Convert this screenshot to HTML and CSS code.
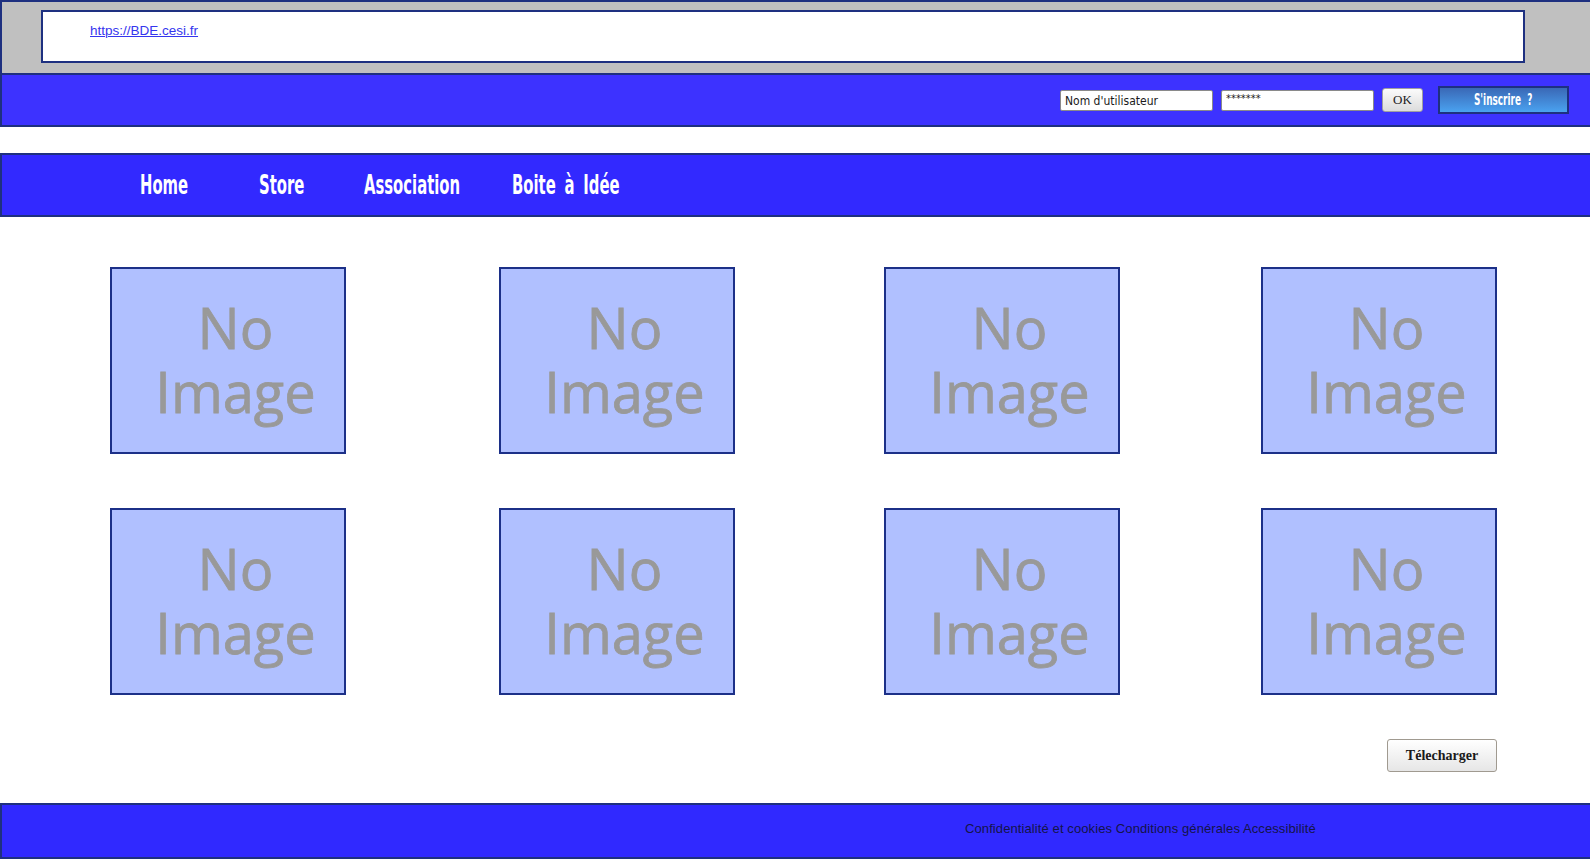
FILE: index.html
```html
<!DOCTYPE html>
<html lang="fr">
<head>
<meta charset="utf-8">
<title>BDE CESI</title>
<link rel="stylesheet" href="styles.css">
</head>
<body>
<header class="top">
  <div class="url-bar">
    <div class="url-box"><a class="url-link" href="#">https://BDE.cesi.fr</a></div>
  </div>
  <div class="login-bar">
    <input class="field" type="text" value="Nom d'utilisateur">
    <input class="field field-pass" type="text" value="*******">
    <button class="ok-btn">OK</button>
    <button class="signup-btn"><span>S'inscrire ?</span></button>
  </div>
</header>

<nav class="nav">
  <a class="nav-item w-home" href="#"><span>Home</span></a>
  <a class="nav-item w-store" href="#"><span>Store</span></a>
  <a class="nav-item w-assoc" href="#"><span>Association</span></a>
  <a class="nav-item w-idea" href="#"><span>Boite à Idée</span></a>
</nav>

<main class="gallery">
  <div class="grid">
    <div class="cell"><div class="noimg"><span class="l1">No</span><span class="l2">Image</span></div></div>
    <div class="cell"><div class="noimg"><span class="l1">No</span><span class="l2">Image</span></div></div>
    <div class="cell"><div class="noimg"><span class="l1">No</span><span class="l2">Image</span></div></div>
    <div class="cell"><div class="noimg"><span class="l1">No</span><span class="l2">Image</span></div></div>
    <div class="cell"><div class="noimg"><span class="l1">No</span><span class="l2">Image</span></div></div>
    <div class="cell"><div class="noimg"><span class="l1">No</span><span class="l2">Image</span></div></div>
    <div class="cell"><div class="noimg"><span class="l1">No</span><span class="l2">Image</span></div></div>
    <div class="cell"><div class="noimg"><span class="l1">No</span><span class="l2">Image</span></div></div>
  </div>
  <div class="actions">
    <button class="dl-btn">Télecharger</button>
  </div>
</main>

<footer class="footer">
  <span>Confidentialité et cookies Conditions générales Accessibilité</span>
</footer>
</body>
</html>
```

FILE: styles.css
```css
html, body {
  margin: 0;
  padding: 0;
  background: #ffffff;
}

body {
  width: 1590px;
  overflow: hidden;
  font-family: "Liberation Sans", Arial, sans-serif;
}

.top {
  display: flex;
  flex-direction: column;
}

.url-bar {
  background: #c0c0c0;
  border-top: 2px solid #1e3080;
  border-left: 2px solid #1e3080;
  padding: 8px 0 0 39px;
  box-sizing: border-box;
  height: 73px;
}

.url-box {
  width: 1484px;
  height: 53px;
  box-sizing: border-box;
  background: #ffffff;
  border: 2px solid #1e3080;
  padding: 9px 0 0 47px;
}

.url-link {
  font-family: "Liberation Sans", Arial, sans-serif;
  font-size: 13.5px;
  color: #3535ee;
  text-decoration: underline;
}

.login-bar {
  height: 50px;
  background: #3d32ff;
  border-top: 2px solid #1e3080;
  border-bottom: 2px solid #1e3080;
  border-left: 2px solid #1e3080;
  display: flex;
  align-items: center;
  justify-content: flex-end;
  padding-right: 21px;
}

.field {
  width: 153px;
  height: 21px;
  box-sizing: border-box;
  margin: 1px 8px 0 0;
  padding: 0 4px;
  border: 1px solid #8a8a8a;
  border-radius: 2px;
  background: #ffffff;
  font-family: "DejaVu Sans Condensed", "DejaVu Sans", sans-serif;
  font-size: 12px;
  color: #1a1a1a;
  outline: none;
}

.field-pass {
  font-size: 11px;
  padding-bottom: 5px;
}

.ok-btn {
  width: 41px;
  height: 24px;
  margin: 0 15px 1px 0;
  padding: 0;
  border: 1px solid #a0a0a0;
  border-radius: 3px;
  background: linear-gradient(#fbfbfb, #dcdcdc);
  font-family: "Liberation Serif", "Times New Roman", serif;
  font-size: 13px;
  color: #222222;
}

.signup-btn {
  width: 131px;
  height: 28px;
  margin: 0 0 1px 0;
  padding: 0;
  border: 2px solid #1e3080;
  background: linear-gradient(#3a68b6, #4aa2f0);
  color: #ffffff;
  font-family: "DejaVu Sans Condensed", "DejaVu Sans", sans-serif;
  font-weight: bold;
  font-size: 16px;
  text-align: center;
  white-space: nowrap;
}

.signup-btn span {
  display: inline-block;
  transform: scaleX(0.62);
  word-spacing: 5px;
}

.nav {
  margin-top: 26px;
  height: 60px;
  background: #3229ff;
  border-top: 2px solid #1e3080;
  border-bottom: 2px solid #1e3080;
  border-left: 2px solid #1e3080;
  display: flex;
  padding-left: 138px;
}

.nav-item {
  display: block;
  line-height: 60px;
  font-family: "DejaVu Sans Condensed", "DejaVu Sans", sans-serif;
  font-weight: bold;
  font-size: 27px;
  color: #ffffff;
  text-decoration: none;
  white-space: nowrap;
}

.nav-item span {
  display: inline-block;
  transform: scaleX(0.61);
  transform-origin: left center;
}

.w-home { width: 119px; }
.w-store { width: 105px; }
.w-assoc { width: 148px; }
.w-idea { word-spacing: 6px; }

.gallery {
  padding-top: 50px;
}

.grid {
  display: grid;
  grid-template-columns: 389px 385px 377px 236px;
  row-gap: 54px;
  padding-left: 110px;
}

.noimg {
  width: 236px;
  height: 187px;
  box-sizing: border-box;
  background: #b0c0ff;
  border: 2px solid #1c3088;
  padding: 35px 0 0 15px;
  text-align: center;
  font-family: "Open Sans", sans-serif;
  font-weight: 400;
  font-size: 56px;
  color: #999999;
  -webkit-text-stroke: 0.8px #999999;
  overflow: hidden;
  display: flex;
  flex-direction: column;
  align-items: center;
}

.l1, .l2 {
  display: block;
  height: 64px;
  line-height: 46px;
}

.actions {
  display: flex;
  justify-content: flex-end;
  padding: 44px 93px 0 0;
}

.dl-btn {
  width: 110px;
  height: 33px;
  padding: 0;
  border: 1px solid #a09a90;
  border-radius: 3px;
  background: linear-gradient(#ffffff, #e6e6e6);
  font-family: "Liberation Serif", "Times New Roman", serif;
  font-weight: bold;
  font-size: 14px;
  color: #1a1a1a;
}

.footer {
  margin-top: 31px;
  background: #3029ff;
  border-top: 2px solid #1e3080;
  border-bottom: 2px solid #1e3080;
  border-left: 2px solid #1e3080;
  padding: 16px 0 0 963px;
  box-sizing: border-box;
  height: 56px;
  font-family: "Liberation Sans", Arial, sans-serif;
  font-size: 13px;
  letter-spacing: 0.1px;
  line-height: 15px;
  color: #14144a;
}
```
